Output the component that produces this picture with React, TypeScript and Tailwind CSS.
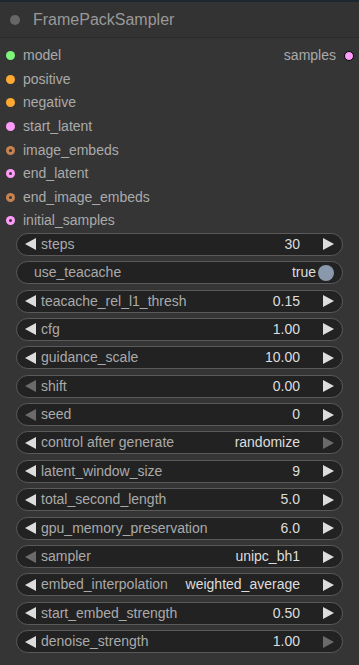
import React from "react";

type Slot = { name: string; color: string; hollow?: boolean };

const inputs: Slot[] = [
  { name: "model", color: "#7cf77c" },
  { name: "positive", color: "#ffa931" },
  { name: "negative", color: "#ffa931" },
  { name: "start_latent", color: "#ff9cf9" },
  { name: "image_embeds", color: "#c6824f", hollow: true },
  { name: "end_latent", color: "#ff9cf9", hollow: true },
  { name: "end_image_embeds", color: "#c6824f", hollow: true },
  { name: "initial_samples", color: "#ff9cf9", hollow: true },
];

type Widget = {
  label: string;
  value: string;
  leftOff?: boolean;
  rightOff?: boolean;
  toggle?: boolean;
};

const widgets: Widget[] = [
  { label: "steps", value: "30" },
  { label: "use_teacache", value: "true", toggle: true },
  { label: "teacache_rel_l1_thresh", value: "0.15" },
  { label: "cfg", value: "1.00" },
  { label: "guidance_scale", value: "10.00" },
  { label: "shift", value: "0.00", leftOff: true },
  { label: "seed", value: "0", leftOff: true },
  { label: "control after generate", value: "randomize", rightOff: true },
  { label: "latent_window_size", value: "9" },
  { label: "total_second_length", value: "5.0" },
  { label: "gpu_memory_preservation", value: "6.0" },
  { label: "sampler", value: "unipc_bh1", leftOff: true },
  { label: "embed_interpolation", value: "weighted_average" },
  { label: "start_embed_strength", value: "0.50" },
  { label: "denoise_strength", value: "1.00", rightOff: true },
];

function Dot({ color, hollow }: { color: string; hollow?: boolean }) {
  return (
    <span
      className="flex h-[9px] w-[9px] items-center justify-center rounded-full"
      style={{ backgroundColor: color }}
    >
      {hollow && <span className="h-[3px] w-[3px] rounded-full bg-[#353535]" />}
    </span>
  );
}

function Arrow({ dir, off }: { dir: "left" | "right"; off?: boolean }) {
  return (
    <svg width="11" height="12" viewBox="0 0 11 12" className="shrink-0">
      <polygon
        points={dir === "left" ? "11,0 11,12 0,6" : "0,0 0,12 11,6"}
        fill={off ? "#6b6b6b" : "#dddddd"}
      />
    </svg>
  );
}

export default function App() {
  return (
    <div
      className="h-[665px] w-[359px] overflow-hidden bg-[#1e2830] pt-[2px]"
      style={{ fontFamily: '"Liberation Sans", Arial, sans-serif' }}
    >
      <div className="h-[670px] rounded-lg bg-[#353535]">
        <div className="flex h-[36px] items-center gap-[13px] border-b border-[#2a2a2a] bg-[#333333] pl-[10px]">
          <span className="h-[10px] w-[10px] rounded-full bg-[#666666]" />
          <span className="text-[16px] text-[#999999]">FramePackSampler</span>
        </div>

        <div className="relative pt-[6px]">
          <div className="absolute right-[5px] top-[6px] flex h-[23.6px] items-center gap-[8px]">
            <span className="text-[14px] text-[#aaaaaa]">samples</span>
            <span className="h-[10px] w-[10px] rounded-full border border-black bg-[#ff9cf9]" />
          </div>
          {inputs.map((s) => (
            <div key={s.name} className="flex h-[23.6px] items-center gap-[8px] pl-[6px]">
              <Dot color={s.color} hollow={s.hollow} />
              <span className="text-[14px] text-[#aaaaaa]">{s.name}</span>
            </div>
          ))}
        </div>

        <div className="flex flex-col gap-[5.4px] pl-[16px] pr-[16px]">
          {widgets.map((w) => (
            <div
              key={w.label}
              className="flex h-[23px] items-center rounded-full border border-[#5a5a5a] bg-[#222222] text-[14px]"
            >
              {w.toggle ? (
                <>
                  <span className="ml-[17px] flex-1 text-[#aaaaaa]">{w.label}</span>
                  <span className="text-[#dddddd]">{w.value}</span>
                  <span className="ml-[2px] mr-[8px] h-[16px] w-[16px] rounded-full bg-[#8999ab]" />
                </>
              ) : (
                <>
                  <span className="ml-[8px]">
                    <Arrow dir="left" off={w.leftOff} />
                  </span>
                  <span className="ml-[5px] flex-1 whitespace-nowrap text-[#aaaaaa]">{w.label}</span>
                  <span className="whitespace-nowrap text-[#dddddd]">{w.value}</span>
                  <span className="ml-[23px] mr-[8px]">
                    <Arrow dir="right" off={w.rightOff} />
                  </span>
                </>
              )}
            </div>
          ))}
        </div>
      </div>
    </div>
  );
}
